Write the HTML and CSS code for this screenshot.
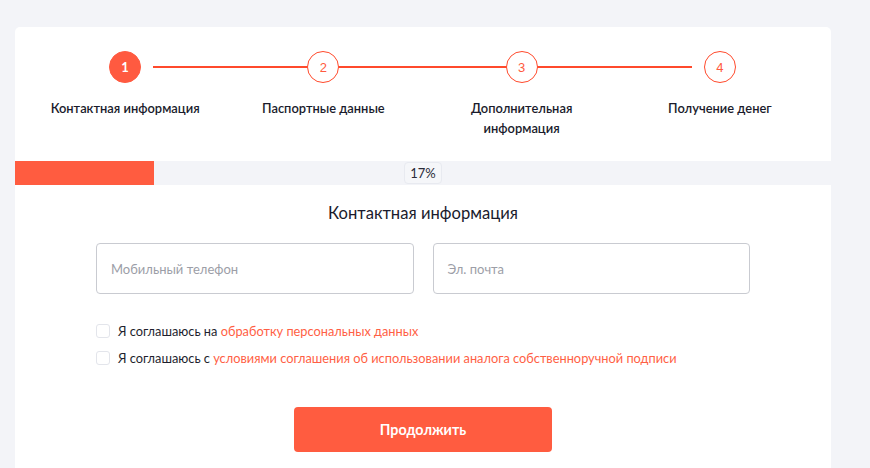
FILE: index.html
```html
<!DOCTYPE html>
<html lang="ru">
<head>
<meta charset="utf-8">
<link rel="stylesheet" href="styles.css">
</head>
<body>
<div class="card">
  <div class="steps">
    <div class="steps-line"></div>
    <div class="step active"><div class="circle">1</div><div class="label">Контактная информация</div></div>
    <div class="step"><div class="circle">2</div><div class="label">Паспортные данные</div></div>
    <div class="step"><div class="circle">3</div><div class="label">Дополнительная<br>информация</div></div>
    <div class="step"><div class="circle">4</div><div class="label">Получение денег</div></div>
  </div>
  <div class="progress">
    <div class="progress-fill" style="width:17%"></div>
    <div class="progress-label">17%</div>
  </div>
  <div class="form">
    <h2 class="title">Контактная информация</h2>
    <div class="inputs">
      <div class="field">Мобильный телефон</div>
      <div class="field">Эл. почта</div>
    </div>
    <div class="checks">
      <label class="check"><span class="box"></span><span>Я соглашаюсь на <a class="link">обработку персональных данных</a></span></label>
      <label class="check"><span class="box"></span><span>Я соглашаюсь с <a class="link">условиями соглашения об использовании аналога собственноручной подписи</a></span></label>
    </div>
    <div class="actions"><button class="btn">Продолжить</button></div>
  </div>
</div>
</body>
</html>
```
FILE: styles.css
```css
* { box-sizing: border-box; }
html, body { margin: 0; padding: 0; }
body {
  background: #f3f4f8;
  font-family: Lato, "Noto Sans", sans-serif;
  color: #1e1f2e;
  height: 468px;
  overflow: hidden;
}
.card {
  margin: 27px 0 0 15px;
  width: 816px;
  background: #fff;
  border-radius: 5px 5px 0 0;
  min-height: 460px;
}
.steps {
  position: relative;
  display: grid;
  grid-template-columns: repeat(4, 1fr);
  padding: 24px 12px 23px 11px;
}
.steps-line {
  position: absolute;
  left: 138px;
  width: 539px;
  top: 39px;
  height: 2px;
  background: #ff4a2c;
}
.step {
  display: flex;
  flex-direction: column;
  align-items: center;
  position: relative;
}
.circle {
  width: 32px;
  height: 32px;
  border-radius: 50%;
  border: 1.5px solid #ff4a2c;
  background: #fff;
  color: #ff5a40;
  font-family: "Liberation Sans", Arial, sans-serif;
  font-size: 13px;
  display: flex;
  align-items: center;
  justify-content: center;
}
.step.active .circle {
  background: #ff5a40;
  border-color: #ff5a40;
  color: #fff;
  font-family: Lato, sans-serif;
  font-weight: 700;
}
.label {
  margin-top: 15px;
  font-size: 12.9px;
  line-height: 20px;
  font-weight: 600;
  text-align: center;
  color: #1a1b2c;
}
.progress {
  display: grid;
  height: 24px;
  background: #f3f4f8;
}
.progress-fill {
  grid-area: 1 / 1;
  justify-self: start;
  height: 24px;
  background: #ff5c40;
}
.progress-label {
  grid-area: 1 / 1;
  justify-self: center;
  align-self: center;
  width: 38px;
  height: 22px;
  border: 1px solid #e8eaf0;
  border-radius: 4px;
  background: #f5f6f9;
  font-size: 13px;
  line-height: 20px;
  text-align: center;
  color: #2a2b38;
}
.form {
  padding: 16px 81px 0;
}
.title {
  margin: 0;
  font-size: 16.6px;
  line-height: 24px;
  font-weight: 400;
  text-align: center;
  color: #1a1b2c;
}
.inputs {
  margin-top: 18px;
  display: grid;
  grid-template-columns: 1fr 1fr;
  gap: 19px;
}
.field {
  height: 51px;
  border: 1px solid #c9cbd1;
  border-radius: 4px;
  padding: 0 14px;
  display: flex;
  align-items: center;
  font-size: 13px;
  color: #9c9ea7;
}
.checks {
  margin-top: 27px;
  display: flex;
  flex-direction: column;
  gap: 7px;
}
.check {
  display: flex;
  align-items: center;
  gap: 8px;
  font-size: 12.8px;
  line-height: 20px;
  color: #1e1f2e;
}
.box {
  width: 14px;
  height: 14px;
  border: 1px solid #e3e5eb;
  border-radius: 3px;
  background: #fff;
  flex: none;
}
.link {
  color: #ff5f45;
  text-decoration: none;
}
.actions {
  margin-top: 39px;
  display: flex;
  justify-content: center;
}
.btn {
  width: 258px;
  height: 45px;
  border: none;
  border-radius: 4px;
  background: #ff5c40;
  color: #fff;
  font-family: Lato, sans-serif;
  font-weight: 700;
  font-size: 14.3px;
}
```
